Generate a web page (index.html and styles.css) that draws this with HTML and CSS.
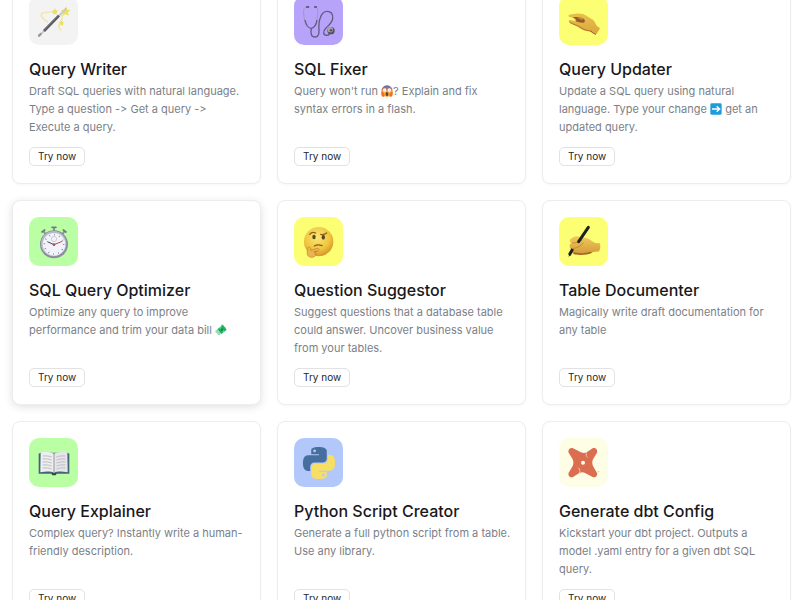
FILE: index.html
```html
<!DOCTYPE html>
<html lang="en">
<head>
  <meta charset="UTF-8">
  <meta name="viewport" content="width=device-width, initial-scale=1.0">
  <title>SQL Tools</title>
  <link rel="stylesheet" href="styles.css">
</head>
<body>
  <main class="tools">
    <article class="card">
      <div class="icon gray">
        <svg viewBox="0 0 96 96" aria-hidden="true">
          <path d="M30 52C12 42 4 28 14 24c10-4 28-2 42-4M70 26c6 12 2 20-4 28s-4 16 4 22" fill="none" stroke="#efe9a8" stroke-width="5"/>
          <path d="M84 4l4 10 10 1-8 7 3 10-10-5-9 6 2-11-8-7 11-1z" fill="#eee15c"/>
          <path d="M51 10l3 6 7 1-5 5 1 7-6-3-6 3 1-7-5-5 7-1zM71 46l2 5 6 1-4 4 1 6-5-3-5 3 1-6-4-4 6-1z" fill="#eadf62"/>
          <path d="M4 92L83 12" stroke="#c8c8c8" stroke-width="6" stroke-linecap="round"/>
          <path d="M18 78L63 32" stroke="#5d5d62" stroke-width="8"/>
          <path d="M17 75L61 30" stroke="#85858a" stroke-width="2"/>
          <path d="M3 92l5-5" stroke="#999" stroke-width="7" stroke-linecap="round"/>
        </svg>
      </div>
      <h2>Query Writer</h2>
      <p>Draft SQL queries with natural language. Type a question -&gt; Get a query -&gt; Execute a query.</p>
      <button type="button">Try now</button>
    </article>

    <article class="card">
      <div class="icon purple">
        <svg viewBox="0 0 96 96" aria-hidden="true">
          <path d="M14 6C4 6 1 13 2 24c1 14 3 24 7 34M38 6c7 2 7 12 5 24-1 11-1 20-4 29" fill="none" stroke="#a294c5" stroke-width="3"/>
          <path d="M6 45c3 16 9 24 19 25 10-2 15-12 17-25" fill="none" stroke="#655b80" stroke-width="4"/>
          <path d="M25 70c-3 16 0 26 11 26 9 0 13-8 12-20-1-14-1-26 4-38 4-12 10-19 20-19 12 0 19 8 17 22-2 13-12 20-20 28-10 10-9 22 2 22 4 0 7-2 9-4" fill="none" stroke="#655b80" stroke-width="4"/>
          <path d="M11 6h6M35 6h5" stroke="#4d445f" stroke-width="4" stroke-linecap="round"/>
          <circle cx="84" cy="77" r="11" fill="#565160"/>
          <circle cx="82" cy="74" r="8" fill="#aaa6a8"/>
          <circle cx="84" cy="76" r="4" fill="#5a5660"/>
        </svg>
      </div>
      <h2>SQL Fixer</h2>
      <p>Query won't run <svg class="emoji" viewBox="0 0 36 36" role="img" aria-label="screaming face"><defs><linearGradient id="scream" x2="0" y2="1"><stop offset="0" stop-color="#5268b5"/><stop offset=".35" stop-color="#c47a66"/><stop offset=".55" stop-color="#ffb52e"/><stop offset="1" stop-color="#ff8b22"/></linearGradient></defs><circle cx="18" cy="18" r="17" fill="url(#scream)"/><circle cx="11" cy="15" r="5" fill="#fff"/><circle cx="25" cy="15" r="5" fill="#fff"/><circle cx="11" cy="15" r="1" fill="#333"/><circle cx="25" cy="15" r="1" fill="#333"/><ellipse cx="18" cy="27" rx="4" ry="6" fill="#58424a"/><path d="M1 20c4-2 8 2 9 15H5C1 32 0 27 1 20zM35 20c-4-2-8 2-9 15h5c4-3 5-8 4-15z" fill="#f36b21"/></svg>? Explain and fix syntax errors in a flash.</p>
      <button type="button">Try now</button>
    </article>

    <article class="card">
      <div class="icon yellow">
        <svg viewBox="0 0 96 96" aria-hidden="true">
          <defs>
            <linearGradient id="pinch" x2="0" y2="1">
              <stop offset="0" stop-color="#e8c04e"/>
              <stop offset="1" stop-color="#dba63c"/>
            </linearGradient>
          </defs>
          <path d="M1 33c0-4 7-5 17-6 16-3 28-1 37 5l20 12c5 4 8 12 11 18l10 8c-3 6-7 13-12 18-7-2-14-5-19-9-12 0-25-5-36-14-10-4-20-8-26-14-2-4 0-7 5-6l14 4c-2-5-4-8-8-11-6-1-12-2-13-5z" fill="url(#pinch)"/>
          <path d="M14 37c12-2 24 0 33 4 5 4 5 10 0 12-8 1-17-2-24-4 4-2 1-8-9-12z" fill="#955b2b"/>
          <path d="M28 36c8 0 15 2 20 6-6 4-13 3-20-6z" fill="#c98c35"/>
          <path d="M5 52c14 7 21 8 31 14 12 9 24 12 35 12" fill="none" stroke="#b27728" stroke-width="3"/>
          <path d="M68 78c4 5 10 8 16 10" fill="none" stroke="#99612d" stroke-width="3"/>
        </svg>
      </div>
      <h2>Query Updater</h2>
      <p>Update a SQL query using natural language. Type your change <svg class="emoji" viewBox="0 0 36 36" role="img" aria-label="right arrow"><rect x="1" y="1" width="34" height="34" rx="4" fill="#1b9ddb"/><path d="M6 18h22M20 10l9 8-9 8" fill="none" stroke="#fff" stroke-width="4"/></svg> get an updated query.</p>
      <button type="button">Try now</button>
    </article>

    <article class="card raised">
      <div class="icon green">
        <svg viewBox="0 0 96 96" aria-hidden="true">
          <path d="M15 14l10 13M81 14L71 27M48 3v13" stroke="#89939a" stroke-width="6"/>
          <path d="M12 18l8-6M76 12l8 6M42 4h12" stroke="#707b82" stroke-width="5" stroke-linecap="round"/>
          <circle cx="48" cy="55" r="42" fill="#888e9c"/>
          <circle cx="47" cy="53" r="38" fill="#b6bac6"/>
          <circle cx="48" cy="55" r="34" fill="#f2f2fb"/>
          <circle cx="48" cy="55" r="29" fill="none" stroke="#727783" stroke-width="5" stroke-dasharray="2 13.18"/>
          <circle cx="48" cy="39" r="8" fill="none" stroke="#b8bac5" stroke-width="2"/>
          <path d="M48 56L28 47" stroke="#444952" stroke-width="3"/>
          <path d="M45 57l28-11" stroke="#b85054" stroke-width="3"/>
          <circle cx="48" cy="56" r="4" fill="#b64b4b"/>
        </svg>
      </div>
      <h2>SQL Query Optimizer</h2>
      <p>Optimize any query to improve performance and trim your data bill <svg class="emoji" viewBox="0 0 36 36" role="img" aria-label="money with wings"><path d="M1 20l8-6 9 10-3 10-7-2-1-5-5-1z" fill="#9bd8b5"/><path d="M17 3l7-2 3 6 7 5-6 4z" fill="#8fd7b3"/><path d="M8 15L23 3l12 14-16 13z" fill="#17b45b"/><path d="M13 11l12 14 4-3L17 8z" fill="#64d18c"/><circle cx="21" cy="17" r="4" fill="#08904a"/></svg></p>
      <button type="button">Try now</button>
    </article>

    <article class="card">
      <div class="icon yellow">
        <svg viewBox="0 0 96 96" aria-hidden="true">
          <defs>
            <radialGradient id="face" cx=".45" cy=".35" r=".65">
              <stop offset="0" stop-color="#fbe778"/>
              <stop offset=".65" stop-color="#f0c63e"/>
              <stop offset="1" stop-color="#d7952c"/>
            </radialGradient>
          </defs>
          <circle cx="47" cy="47" r="44" fill="url(#face)"/>
          <path d="M20 25c5-6 12-7 18-4M53 25c6 2 12 1 18-4" fill="none" stroke="#87601c" stroke-width="4" stroke-linecap="round"/>
          <ellipse cx="33" cy="33" rx="5" ry="7" fill="#5c431d"/>
          <ellipse cx="61" cy="34" rx="5" ry="7" fill="#5c431d"/>
          <path d="M34 60c9-5 16-4 23-1" fill="none" stroke="#865a1c" stroke-width="4" stroke-linecap="round"/>
          <path d="M14 67c2-6 8-5 9 1v5l19-6c7-1 9 6 3 8l-10 4c8 0 6 7 2 11-7 6-19 5-23-2-3-6-1-13 0-21z" fill="#ecb451" stroke="#c28228" stroke-width="2"/>
          <path d="M31 78l11-3M33 85l6-2" stroke="#b77624" stroke-width="2"/>
        </svg>
      </div>
      <h2>Question Suggestor</h2>
      <p>Suggest questions that a database table could answer. Uncover business value from your tables.</p>
      <button type="button">Try now</button>
    </article>

    <article class="card">
      <div class="icon yellow">
        <svg viewBox="0 0 96 96" aria-hidden="true">
          <defs>
            <linearGradient id="hand" x2="0" y2="1">
              <stop offset="0" stop-color="#f0ca5e"/>
              <stop offset="1" stop-color="#d39a38"/>
            </linearGradient>
          </defs>
          <path d="M8 39c7-5 15-10 23-7l22 4c12 2 19 11 29 15l14 1c2 10 1 20-4 25-9-1-18 2-26 5-15 4-33 4-48 1-7-2-10-7-7-12-9-8-7-16-1-21-6-4-6-8-2-11z" fill="url(#hand)"/>
          <path d="M17 79c17 4 34 3 49-2l7 3c-15 7-42 9-57 4z" fill="#a36825"/>
          <path d="M13 68c15-2 25-8 34-18M13 51c10 0 19-3 29-9" fill="none" stroke="#c88c35" stroke-width="3"/>
          <path d="M61 4L32 47" stroke="#20211e" stroke-width="9" stroke-linecap="round"/>
          <path d="M14 69L4 87" stroke="#20211e" stroke-width="9"/>
          <path d="M5 83l-4 9 8-5z" fill="#17201f"/>
        </svg>
      </div>
      <h2>Table Documenter</h2>
      <p>Magically write draft documentation for any table</p>
      <button type="button">Try now</button>
    </article>

    <article class="card">
      <div class="icon green">
        <svg viewBox="0 0 96 96" aria-hidden="true">
          <path d="M2 20l6-3h80l6 3v60H56c-3 4-13 4-16 0H2z" fill="#426675"/>
          <path d="M40 79h16l-3 6H43z" fill="#3e4144"/>
          <path d="M8 16c17-2 30-1 40 4v57c-10-4-24-4-41-1z" fill="#eeeef1"/>
          <path d="M88 16c-17-2-30-1-40 4v57c10-4 24-4 41-1z" fill="#e6e6ea"/>
          <path d="M48 20v57" stroke="#95979c" stroke-width="3"/>
          <path d="M14 27c10-1 19 0 27 3M14 36c10-1 19 0 27 3M14 45c10-1 19 0 27 3M14 54c10-1 19 0 27 3M14 63c10-1 19 0 27 3M55 30c8-3 17-4 27-3M55 39c8-3 17-4 27-3M55 48c8-3 17-4 27-3M55 57c8-3 17-4 27-3M55 66c8-3 17-4 27-3" fill="none" stroke="#bbbcc3" stroke-width="3"/>
        </svg>
      </div>
      <h2>Query Explainer</h2>
      <p>Complex query? Instantly write a human-friendly description.</p>
      <button type="button">Try now</button>
    </article>

    <article class="card">
      <div class="icon blue">
        <svg viewBox="0 0 24 24" aria-hidden="true">
          <path fill="#466f9f" d="M14.25.18l.9.2.73.26.59.3.45.32.34.34.25.34.16.33.1.3.04.26.02.2-.01.13V8.5l-.05.63-.13.55-.21.46-.26.38-.3.31-.33.25-.35.19-.35.14-.33.1-.3.07-.26.04-.21.02H8.77l-.69.05-.59.14-.5.22-.41.27-.33.32-.27.35-.2.36-.15.37-.1.35-.07.32-.04.27-.02.21v3.06H3.17l-.21-.03-.28-.07-.32-.12-.35-.18-.36-.26-.36-.36-.35-.46-.32-.59-.28-.73-.21-.88-.14-1.05-.05-1.23.06-1.22.16-1.04.24-.87.32-.71.36-.57.4-.44.42-.33.42-.24.4-.16.36-.1.32-.05.24-.01h.16l.06.01h8.16v-.83H6.18l-.01-2.75-.02-.37.05-.34.11-.31.17-.28.25-.26.31-.23.38-.2.44-.18.51-.15.58-.12.64-.1.71-.06.77-.04.84-.02 1.27.05zm-6.3 1.98l-.23.33-.08.41.08.41.23.34.33.22.41.09.41-.09.33-.22.23-.34.08-.41-.08-.41-.23-.33-.33-.22-.41-.09-.41.09z"/>
          <path fill="#f7df65" d="M21.04 6.11l.28.06.32.12.35.18.36.27.36.35.35.47.32.59.28.73.21.88.14 1.04.05 1.23-.06 1.23-.16 1.04-.24.86-.32.71-.36.57-.4.45-.42.33-.42.24-.4.16-.36.09-.32.05-.24.02-.16-.01h-8.22v.82h5.84l.01 2.76.02.36-.05.34-.11.31-.17.29-.25.25-.31.24-.38.2-.44.17-.51.15-.58.13-.64.09-.71.07-.77.04-.84.01-1.27-.04-1.07-.14-.9-.2-.73-.25-.59-.3-.45-.33-.34-.34-.25-.34-.16-.33-.1-.3-.04-.25-.02-.2.01-.13v-5.34l.05-.64.13-.54.21-.46.26-.38.3-.32.33-.24.35-.2.35-.14.33-.1.3-.06.26-.04.21-.02.13-.01h5.84l.69-.05.59-.14.5-.21.41-.28.33-.32.27-.35.2-.36.15-.36.1-.35.07-.32.04-.28.02-.21V6.07h2.09l.14.01zm-6.47 14.25l-.23.33-.08.41.08.41.23.33.33.23.41.08.41-.08.33-.23.23-.33.08-.41-.08-.41-.23-.33-.33-.23-.41-.08-.41.08z"/>
        </svg>
      </div>
      <h2>Python Script Creator</h2>
      <p>Generate a full python script from a table. Use any library.</p>
      <button type="button">Try now</button>
    </article>

    <article class="card">
      <div class="icon cream">
        <svg viewBox="0 0 96 96" aria-hidden="true">
          <path d="M15 4l24 12c6 3 11 3 17 0L74 4c9-3 16 5 13 13L75 37c-3 7-3 13 0 20l12 21c3 8-5 15-13 12L51 78c-6-3-11-3-17 0L15 90C6 93-1 85 2 77l12-20c3-7 3-13 0-20L2 17C-1 9 6 1 15 4z" fill="#dc6e50"/>
          <path d="M56 15c-3 8-2 12 3 17M34 79c3-8 2-12-3-17" fill="none" stroke="#f3c4ae" stroke-width="3"/>
          <circle cx="45" cy="47" r="6" fill="#fefde6"/>
          <path d="M89 74h5" stroke="#dba795" stroke-width="2"/>
        </svg>
      </div>
      <h2>Generate dbt Config</h2>
      <p>Kickstart your dbt project. Outputs a model .yaml entry for a given dbt SQL query.</p>
      <button type="button">Try now</button>
    </article>
  </main>
</body>
</html>
```
FILE: styles.css
```css
* {
  box-sizing: border-box;
}
body {
  margin: 0;
  background: #fff;
  color: #18181b;
  font-family: Inter, sans-serif;
  font-variant-ligatures: no-contextual; /* keep -> as two characters */
}
.tools {
  display: grid;
  grid-template-columns: repeat(3, 1fr);
  grid-auto-rows: minmax(205px, auto);
  gap: 16px;
  margin: -21px 9px 16px 12px; /* first row sits partly above the fold */
}
.card {
  display: flex;
  flex-direction: column;
  align-items: flex-start;
  padding: 16px 12px 17px 16px;
  background: #fff;
  border: 1px solid #ededee;
  border-radius: 8px;
  box-shadow: 0 1px 3px rgba(0, 0, 0, 0.04);
}
.card.raised {
  box-shadow: 0 2px 8px rgba(0, 0, 0, 0.12);
}
.icon {
  display: flex;
  justify-content: center;
  align-items: center;
  width: 49px;
  height: 49px;
  border-radius: 10px;
}
.icon svg {
  width: 32px;
  height: 32px;
  overflow: visible;
}
.gray { background: #f3f3f3; }
.purple { background: #b8a3fb; }
.yellow { background: #fcff74; }
.green { background: #bbffa5; }
.blue { background: #b2c8fb; }
.cream { background: #fefde6; }
.card h2 {
  margin: 12px 0 1px;
  font-size: 16px;
  line-height: 24px;
  font-weight: 450;
}
.card p {
  margin: 0;
  font-size: 11px;
  line-height: 18px;
  color: #7b7f88;
}
.emoji {
  width: 12px;
  height: 12px;
  vertical-align: -2px;
}
.card button {
  margin-top: auto;
  height: 19px;
  padding: 0 8px 1px;
  border: 1px solid #e2e2e4;
  border-radius: 5px;
  background: #fff;
  color: #27272a;
  font-family: inherit;
  font-size: 10px;
  line-height: 16px;
  font-weight: 400;
  cursor: pointer;
}
.card button:hover {
  background: #f6f6f7;
}
```
